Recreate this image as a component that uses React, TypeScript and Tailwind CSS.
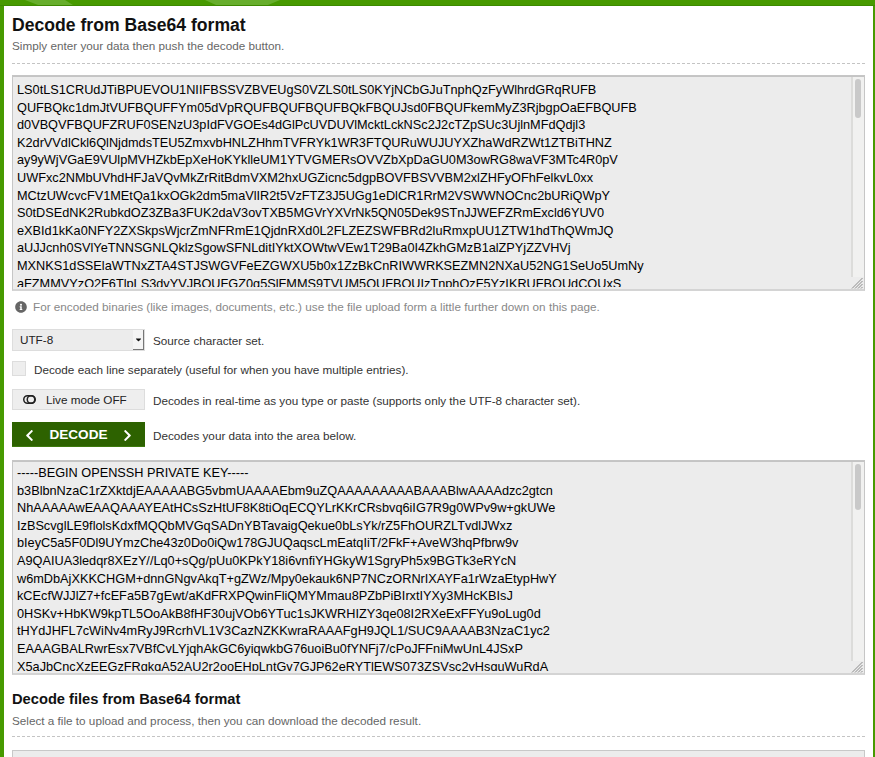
import { FaChevronLeft, FaChevronRight, FaInfoCircle, FaCaretDown } from 'react-icons/fa'

const encoded = [
  'LS0tLS1CRUdJTiBPUEVOU1NIIFBSSVZBVEUgS0VZLS0tLS0KYjNCbGJuTnphQzFyWlhrdGRqRUFB',
  'QUFBQkc1dmJtVUFBQUFFYm05dVpRQUFBQUFBQUFBQkFBQUJsd0FBQUFkemMyZ3RjbgpOaEFBQUFB',
  'd0VBQVFBQUFZRUF0SENzU3pIdFVGOEs4dGlPcUVDUVlMcktLckNSc2J2cTZpSUc3UjlnMFdQdjl3',
  'K2drVVdlCkl6QlNjdmdsTEU5ZmxvbHNLZHhmTVFRYk1WR3FTQURuWUJUYXZhaWdRZWt1ZTBiTHNZ',
  'ay9yWjVGaE9VUlpMVHZkbEpXeHoKYklleUM1YTVGMERsOVVZbXpDaGU0M3owRG8waVF3MTc4R0pV',
  'UWFxc2NMbUVhdHFJaVQvMkZrRitBdmVXM2hxUGZicnc5dgpBOVFBSVVBM2xlZHFyOFhFelkvL0xx',
  'MCtzUWcvcFV1MEtQa1kxOGk2dm5maVlIR2t5VzFTZ3J5UGg1eDlCR1RrM2VSWWNOCnc2bURiQWpY',
  'S0tDSEdNK2RubkdOZ3ZBa3FUK2daV3ovTXB5MGVrYXVrNk5QN05Dek9STnJJWEFZRmExcld6YUV0',
  'eXBId1kKa0NFY2ZXSkpsWjcrZmNFRmE1QjdnRXd0L2FLZEZSWFBRd2luRmxpUU1ZTW1hdThQWmJQ',
  'aUJJcnh0SVlYeTNNSGNLQklzSgowSFNLditIYktXOWtwVEw1T29Ba0I4ZkhGMzB1alZPYjZZVHVj',
  'MXNKS1dSSElaWTNxZTA4STJSWGVFeEZGWXU5b0x1ZzBkCnRIWWRKSEZMN2NXaU52NG1SeUo5UmNy',
  'aFZMMVYzQ2F6TlpLS3dyYVJBQUFGZ0g5SlFMMS9TVUM5QUFBQUIzTnphQzF5YzIKRUFBQUdCQUxS',
]

const decoded = [
  '-----BEGIN OPENSSH PRIVATE KEY-----',
  'b3BlbnNzaC1rZXktdjEAAAAABG5vbmUAAAAEbm9uZQAAAAAAAAABAAABlwAAAAdzc2gtcn',
  'NhAAAAAwEAAQAAAYEAtHCsSzHtUF8K8tiOqECQYLrKKrCRsbvq6iIG7R9g0WPv9w+gkUWe',
  'IzBScvglLE9flolsKdxfMQQbMVGqSADnYBTavaigQekue0bLsYk/rZ5FhOURZLTvdlJWxz',
  'bIeyC5a5F0Dl9UYmzChe43z0Do0iQw178GJUQaqscLmEatqIiT/2FkF+AveW3hqPfbrw9v',
  'A9QAIUA3ledqr8XEzY//Lq0+sQg/pUu0KPkY18i6vnfiYHGkyW1SgryPh5x9BGTk3eRYcN',
  'w6mDbAjXKKCHGM+dnnGNgvAkqT+gZWz/Mpy0ekauk6NP7NCzORNrIXAYFa1rWzaEtypHwY',
  'kCEcfWJJlZ7+fcEFa5B7gEwt/aKdFRXPQwinFliQMYMmau8PZbPiBIrxtIYXy3MHcKBIsJ',
  '0HSKv+HbKW9kpTL5OoAkB8fHF30ujVOb6YTuc1sJKWRHIZY3qe08I2RXeExFFYu9oLug0d',
  'tHYdJHFL7cWiNv4mRyJ9RcrhVL1V3CazNZKKwraRAAAFgH9JQL1/SUC9AAAAB3NzaC1yc2',
  'EAAAGBALRwrEsx7VBfCvLYjqhAkGC6yiqwkbG76uoiBu0fYNFj7/cPoJFFniMwUnL4JSxP',
  'X5aJbCncXzEEGzFRqkgA52AU2r2ooEHpLntGy7GJP62eRYTlEWS073ZSVsc2yHsguWuRdA',
]

function Dashed() {
  return <div className="border-b border-dashed border-[#c4c4c4]" />
}

function ToggleIcon() {
  return (
    <svg width="13" height="9" viewBox="0 0 13 9" fill="none" stroke="#222" strokeWidth="1.5">
      <rect x="0.75" y="0.75" width="11.5" height="7.5" rx="3.75" />
      <circle cx="8" cy="4.5" r="3.75" />
    </svg>
  )
}

function Grip() {
  return (
    <svg width="12" height="12" viewBox="0 0 12 12" stroke="#8a8a8a" strokeWidth="1">
      <path d="M1 11.5 11.5 1M4 11.5 11.5 4M7 11.5 11.5 7M10 11.5 11.5 10" />
    </svg>
  )
}

// headless page draws no native scrollbar, so the bar and grip lie over the textarea
function DataArea({ lines, thumb, textTop, className }: { lines: string[]; thumb: string; textTop: string; className: string }) {
  return (
    <div className={`relative ${className}`}>
      <textarea
        readOnly
        className={`block w-full h-full resize-none overflow-hidden whitespace-pre bg-[#ececec] border border-[#c6c6c6] border-b-[2px] border-b-[#d4d4d4] shadow-[inset_0_1px_0_#c4c4c4] pl-[4px] pr-[16px] text-[12.72px] leading-[17.6px] text-black outline-none font-['Liberation_Sans',sans-serif] ${textTop}`}
        defaultValue={lines.join('\n')}
      />
      <div className="absolute left-[1px] right-[14px] bottom-[2px] h-[2px] bg-[#ececec]" />
      <div className="absolute right-[1px] top-[2px] bottom-[2px] w-[13px] flex flex-col bg-[#ececec]">
        <div className="flex-1 min-h-0 ml-0 border-l-[2px] border-[#dcdcda] bg-[#f1f1f0] pt-[2px] pl-[2px]">
          <div className={`w-[6px] rounded-full bg-[#c9c9c9] ${thumb}`} />
        </div>
        <div className="h-[12px] shrink-0">
          <Grip />
        </div>
      </div>
    </div>
  )
}

export default function App() {
  return (
    <div className="h-[757px] overflow-hidden flex flex-col bg-[#479a00] font-['Liberation_Sans',sans-serif]">
      <div className="h-[6px] shrink-0 border-b border-[#3d8a00]">
        <svg width="875" height="5" viewBox="0 0 875 5">
          <path d="M25 0h40l8 5H38z M205 0h75l-12 5h-52z" fill="#67ae2c" />
        </svg>
      </div>
      <div className="flex-1 min-h-0 ml-[4px] mr-[2px] bg-white px-2 overflow-hidden">
        <h1 className="mt-[8px] text-[17.6px] leading-[22px] font-bold text-[#111]">Decode from Base64 format</h1>
        <p className="mt-[3px] text-[11.73px] leading-[14px] text-[#666]">
          Simply enter your data then push the decode button.
        </p>
        <div className="mt-[10px]">
          <Dashed />
        </div>
        <DataArea lines={encoded} thumb="h-[39px]" textTop="pt-[5px]" className="mt-[11px] h-[216px]" />
        <div className="mt-[8px] h-[16px] flex items-center gap-[6px] pl-[3px] text-[11.73px] text-[#888]">
          <FaInfoCircle className="text-[12px] text-[#666]" />
          <span>For encoded binaries (like images, documents, etc.) use the file upload form a little further down on this page.</span>
        </div>
        <div className="mt-[14px] flex items-center gap-2">
          <div className="relative w-[133px] h-[22px]">
            <select className="block w-full h-full appearance-none bg-[#ececec] border border-[#ddd] pl-[7px] text-[11.73px] text-[#222] outline-none">
              <option>UTF-8</option>
            </select>
            <span className="absolute right-[1px] top-[1px] bottom-[1px] w-[11px] flex items-center justify-center bg-[#f4f4f4] border-r border-b border-[#777] text-[#111]">
              <FaCaretDown className="text-[9px]" />
            </span>
          </div>
          <span className="pt-[2px] text-[11.73px] text-[#333]">Source character set.</span>
        </div>
        <label className="mt-[10px] flex items-center gap-2 h-[15px]">
          <span className="w-[14px] h-[15px] bg-[#eee] border border-[#ddd]" />
          <span className="pt-[2px] text-[11.73px] text-[#333]">Decode each line separately (useful for when you have multiple entries).</span>
        </label>
        <div className="mt-[13px] flex items-center gap-2">
          <button className="w-[133px] h-[21px] flex items-center bg-[#eee] border border-[#ddd] pl-[10px] gap-[10px] text-[11.73px] text-[#222]">
            <ToggleIcon />
            Live mode OFF
          </button>
          <span className="pt-[2px] text-[11.73px] text-[#333]">Decodes in real-time as you type or paste (supports only the UTF-8 character set).</span>
        </div>
        <div className="mt-[12px] flex items-center gap-2">
          <button className="w-[133px] h-[25px] pt-[2px] flex items-center justify-center gap-[13px] bg-[#2d6200] border-b border-[#3f7a0f] text-[13.6px] font-bold text-white">
            <FaChevronLeft className="text-[13px]" />
            DECODE
            <FaChevronRight className="text-[13px]" />
          </button>
          <span className="pt-[2px] text-[11.73px] text-[#333]">Decodes your data into the area below.</span>
        </div>
        <DataArea lines={decoded} thumb="h-[46px]" textTop="pt-[3px]" className="mt-[13px] h-[215px]" />
        <h2 className="mt-[15px] text-[14.68px] leading-[18px] font-bold text-[#111]">Decode files from Base64 format</h2>
        <p className="mt-[6px] text-[11.73px] leading-[14px] text-[#666]">
          Select a file to upload and process, then you can download the decoded result.
        </p>
        <div className="mt-[8px]">
          <Dashed />
        </div>
        <div className="mt-[13px] h-[40px] bg-[#ececec] border border-[#c8c8c8]" />
      </div>
    </div>
  )
}
